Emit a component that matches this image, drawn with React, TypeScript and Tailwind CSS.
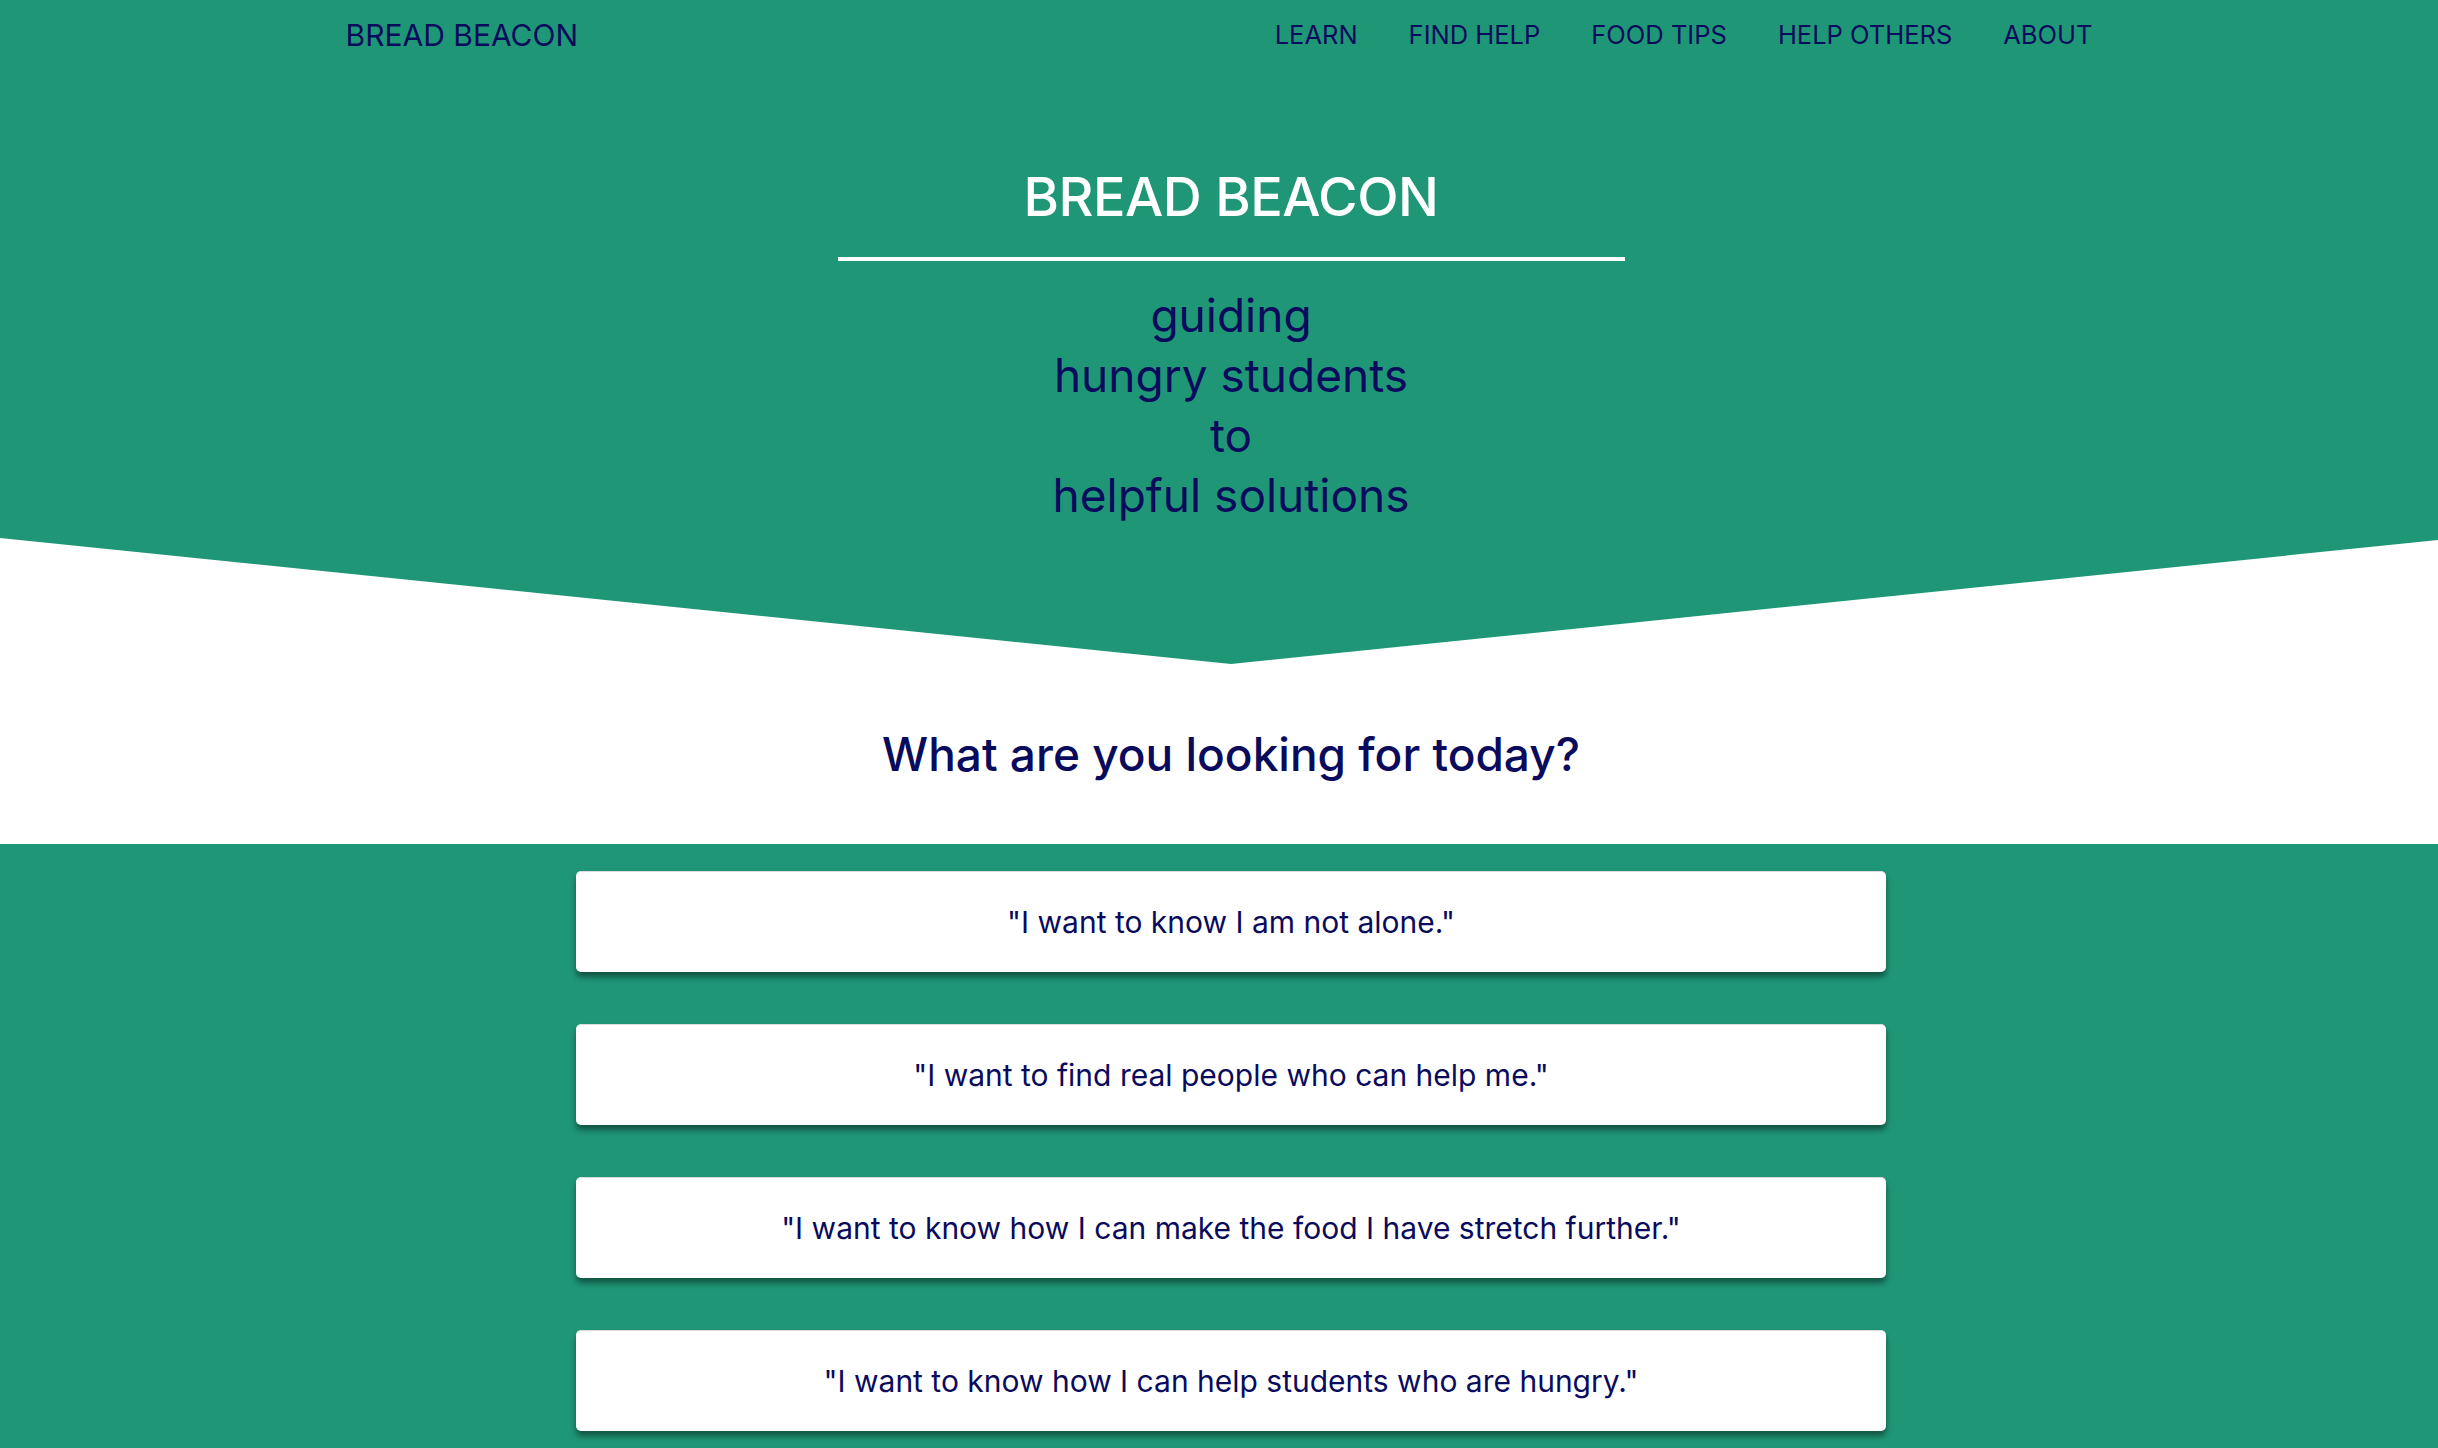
const navLinks = ['LEARN', 'FIND HELP', 'FOOD TIPS', 'HELP OTHERS', 'ABOUT']

const choices = [
  '"I want to know I am not alone."',
  '"I want to find real people who can help me."',
  '"I want to know how I can make the food I have stretch further."',
  '"I want to know how I can help students who are hungry."',
]

export default function App() {
  return (
    <div className="min-h-screen bg-white font-['Inter','Liberation_Sans',sans-serif] text-[#0a0b5c]">
      {/* Hero with the angled bottom */}
      <header className="h-[664px] bg-[#1f9777] [clip-path:polygon(0_0,100%_0,100%_540px,calc(50%_+_12px)_100%,0_538px)]">
        <nav className="mx-auto flex h-[70px] w-[1747px] items-center justify-between">
          <a href="#" className="text-[30px] leading-none">BREAD BEACON</a>
          <div className="flex items-center gap-[51px]">
            {navLinks.map((link) => (
              <a key={link} href="#" className="text-[25.5px] leading-none">
                {link}
              </a>
            ))}
          </div>
        </nav>

        <div className="flex flex-col items-center pl-[24px] pt-[100px]">
          <h1 className="text-[54px] font-medium leading-none tracking-[-0.5px] text-white">BREAD BEACON</h1>
          <div className="mt-[33px] h-[4px] w-[787px] bg-white" />
          <p className="mt-[24px] text-center text-[46px] leading-[60px]">
            guiding
            <br />
            hungry students
            <br />
            to
            <br />
            helpful solutions
          </p>
        </div>
      </header>

      <section className="flex h-[180px] items-center justify-center pl-[24px]">
        <h2 className="text-[46px] font-medium leading-none">What are you looking for today?</h2>
      </section>

      {/* Options */}
      <section className="bg-[#1f9777] pb-[60px] pl-[24px] pt-[27px]">
        <div className="mx-auto flex w-[1310px] flex-col gap-[52px]">
          {choices.map((choice) => (
            <button
              key={choice}
              className="flex h-[101px] w-full items-center justify-center rounded-[5px] border-t border-[#dcdcdc] bg-white text-[30px] shadow-[0_5px_6px_rgba(0,0,0,0.45)]"
            >
              {choice}
            </button>
          ))}
        </div>
      </section>
    </div>
  )
}
